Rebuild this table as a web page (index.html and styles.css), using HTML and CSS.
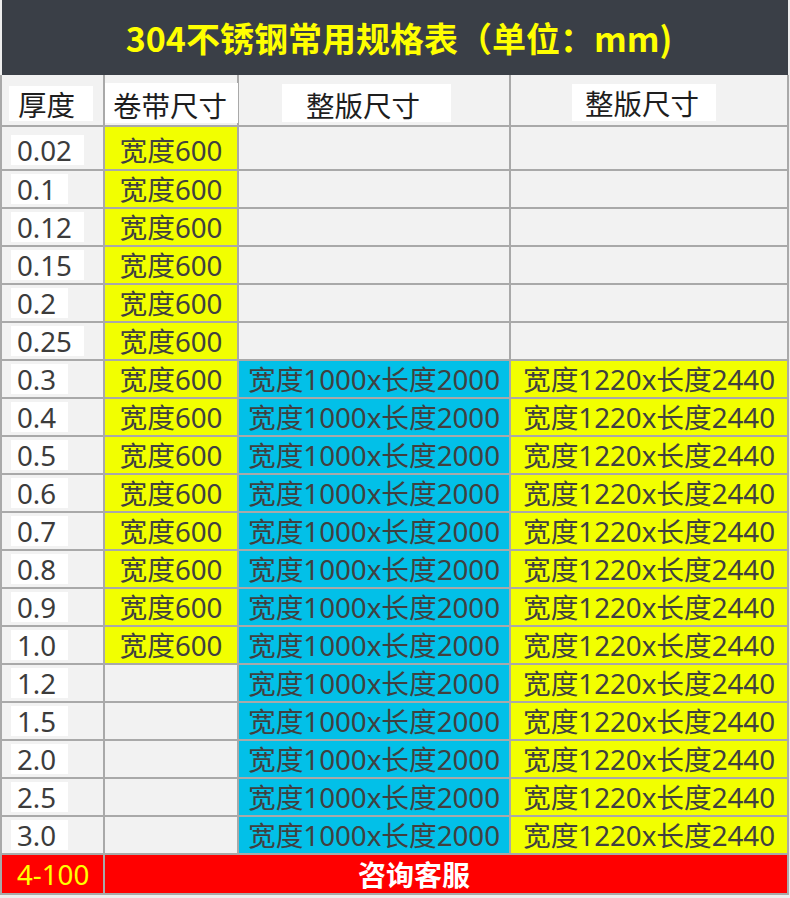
FILE: index.html
```html
<!DOCTYPE html>
<html lang="zh">
<head>
<meta charset="utf-8">
<title>304不锈钢常用规格表</title>
<link rel="stylesheet" href="styles.css">
</head>
<body>
<div class="sheet">
  <div class="title">304不锈钢常用规格表（单位：mm)</div>
  <div class="grid">
    <div class="cell head h1"><span class="hbox">厚度</span></div>
    <div class="cell head h2"><span class="hbox">卷带尺寸</span></div>
    <div class="cell head h3"><span class="hbox">整版尺寸</span></div>
    <div class="cell head h4"><span class="hbox">整版尺寸</span></div>

    <div class="cell th first"><span class="num">0.02</span></div><div class="cell y first">宽度600</div><div class="cell"></div><div class="cell"></div>
    <div class="cell th"><span class="num">0.1</span></div><div class="cell y">宽度600</div><div class="cell"></div><div class="cell"></div>
    <div class="cell th"><span class="num">0.12</span></div><div class="cell y">宽度600</div><div class="cell"></div><div class="cell"></div>
    <div class="cell th"><span class="num">0.15</span></div><div class="cell y">宽度600</div><div class="cell"></div><div class="cell"></div>
    <div class="cell th"><span class="num">0.2</span></div><div class="cell y">宽度600</div><div class="cell"></div><div class="cell"></div>
    <div class="cell th"><span class="num">0.25</span></div><div class="cell y">宽度600</div><div class="cell"></div><div class="cell"></div>

    <div class="cell th"><span class="num">0.3</span></div><div class="cell y">宽度600</div><div class="cell b">宽度1000x长度2000</div><div class="cell y">宽度1220x长度2440</div>
    <div class="cell th"><span class="num">0.4</span></div><div class="cell y">宽度600</div><div class="cell b">宽度1000x长度2000</div><div class="cell y">宽度1220x长度2440</div>
    <div class="cell th"><span class="num">0.5</span></div><div class="cell y">宽度600</div><div class="cell b">宽度1000x长度2000</div><div class="cell y">宽度1220x长度2440</div>
    <div class="cell th"><span class="num">0.6</span></div><div class="cell y">宽度600</div><div class="cell b">宽度1000x长度2000</div><div class="cell y">宽度1220x长度2440</div>
    <div class="cell th"><span class="num">0.7</span></div><div class="cell y">宽度600</div><div class="cell b">宽度1000x长度2000</div><div class="cell y">宽度1220x长度2440</div>
    <div class="cell th"><span class="num">0.8</span></div><div class="cell y">宽度600</div><div class="cell b">宽度1000x长度2000</div><div class="cell y">宽度1220x长度2440</div>
    <div class="cell th"><span class="num">0.9</span></div><div class="cell y">宽度600</div><div class="cell b">宽度1000x长度2000</div><div class="cell y">宽度1220x长度2440</div>
    <div class="cell th"><span class="num">1.0</span></div><div class="cell y">宽度600</div><div class="cell b">宽度1000x长度2000</div><div class="cell y">宽度1220x长度2440</div>

    <div class="cell th"><span class="num">1.2</span></div><div class="cell"></div><div class="cell b">宽度1000x长度2000</div><div class="cell y">宽度1220x长度2440</div>
    <div class="cell th"><span class="num">1.5</span></div><div class="cell"></div><div class="cell b">宽度1000x长度2000</div><div class="cell y">宽度1220x长度2440</div>
    <div class="cell th"><span class="num">2.0</span></div><div class="cell"></div><div class="cell b">宽度1000x长度2000</div><div class="cell y">宽度1220x长度2440</div>
    <div class="cell th"><span class="num">2.5</span></div><div class="cell"></div><div class="cell b">宽度1000x长度2000</div><div class="cell y">宽度1220x长度2440</div>
    <div class="cell th"><span class="num">3.0</span></div><div class="cell"></div><div class="cell b">宽度1000x长度2000</div><div class="cell y">宽度1220x长度2440</div>

    <div class="foot foot-l">4-100</div>
    <div class="foot foot-r">咨询客服</div>
  </div>
</div>
</body>
</html>
```

FILE: styles.css
```css
html, body {
  margin: 0;
  padding: 0;
  background: #eeeeee;
}
body {
  width: 790px;
  height: 898px;
  overflow: hidden;
  font-family: "Noto Sans", "Noto Sans CJK SC", sans-serif;
}
.sheet {
  width: 789px;
  background: #eeeeee;
}
.title {
  margin-left: 2px;
  width: 786px;
  height: 75px;
  background: #3a3f47;
  color: #ffff00;
  font-family: "Noto Sans CJK SC", sans-serif;
  font-weight: 700;
  font-size: 34px;
  display: flex;
  align-items: center;
  justify-content: center;
  padding: 0 0 0 8px;
  box-sizing: border-box;
}
.grid {
  display: grid;
  grid-template-columns: 101px 132px 270px 276px;
  grid-template-rows: 50px 42px repeat(18, 36px) 38px;
  gap: 2px;
  padding: 0 2px 2px 2px;
  background: #a9a9a9;
}
.cell {
  background: #f2f2f2;
  color: #404040;
  font-size: 27.7px;
  display: flex;
  align-items: center;
  justify-content: center;
  white-space: nowrap;
  line-height: 30px;
  box-sizing: border-box;
  min-height: 0;
}
.cell.first {
  padding-top: 4px;
}
.cell.y {
  background: #f2ff00;
}
.cell.b {
  background: #02c0e8;
}
.cell.th {
  justify-content: flex-start;
}
.num {
  background: #ffffff;
  margin-left: 9px;
  padding: 0 12px 0 6px;
  height: 30px;
  line-height: 30px;
  display: inline-block;
  color: #3c3c3c;
}
.head {
  font-size: 28.5px;
  color: #1e1e1e;
  justify-content: flex-start;
  align-items: flex-start;
  line-height: 1;
}
.hbox {
  background: #ffffff;
  display: inline-block;
  line-height: 38px;
  height: 38px;
  padding-top: 3px;
  box-sizing: border-box;
}
.h1 .hbox {
  margin: 11px 0 0 7px;
  padding: 2px 18px 0 9px;
  height: 35px;
  line-height: 35px;
}
.h2 .hbox {
  margin: 8px 0 0 0;
  padding: 3px 11px 0 8px;
  height: 40px;
  line-height: 40px;
}
.h3 .hbox {
  margin: 9px 0 0 43px;
  padding: 3px 31px 0 24px;
}
.h4 .hbox {
  margin: 9px 0 0 61px;
  padding: 2px 17px 0 13px;
  height: 37px;
  line-height: 37px;
}
.foot {
  background: #ff0000;
  display: flex;
  align-items: center;
  white-space: nowrap;
  line-height: 30px;
  font-size: 27.7px;
}
.foot-l {
  color: #ffff00;
  justify-content: flex-start;
  padding-left: 15px;
}
.foot-r {
  grid-column: 2 / 5;
  color: #ffffff;
  justify-content: center;
  font-family: "Noto Sans CJK SC", sans-serif;
  font-weight: 700;
  font-size: 28px;
  padding-right: 64px;
}
```
